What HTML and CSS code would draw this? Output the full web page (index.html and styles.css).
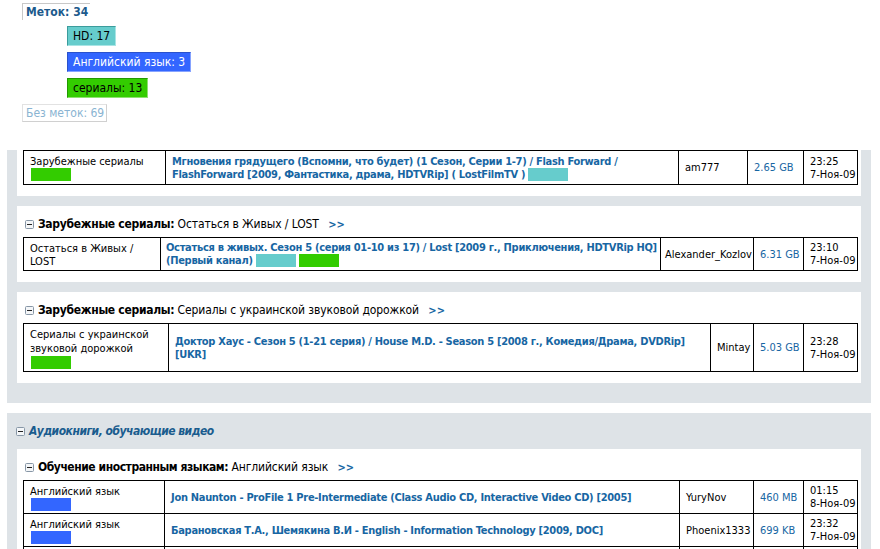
FILE: index.html
```html
<!DOCTYPE html>
<html lang="ru">
<head>
<meta charset="utf-8">
<title>Трекер</title>
<link rel="stylesheet" href="styles.css">
</head>
<body>
<div class="tags">
  <div class="tags-head">Меток: 34</div>
  <ul class="tag-list">
    <li class="tag tag-hd">HD: 17</li>
    <li class="tag tag-en">Английский язык: 3</li>
    <li class="tag tag-ser">сериалы: 13</li>
  </ul>
  <div class="tags-none">Без меток: 69</div>
</div>

<div class="section">
  <div class="panel">
    <table class="list t1">
      <colgroup><col class="c1"><col class="c2"><col class="c3"><col class="c4"><col class="c5"></colgroup>
      <tr>
        <td class="cat">Зарубежные сериалы<span class="sw sw-block sw-ser"></span></td>
        <td class="title"><a href="#">Мгновения грядущего (Вспомни, что будет) (1 Сезон, Серии 1-7) / Flash Forward / FlashForward [2009, Фантастика, драма, HDTVRip] ( LostFilmTV )</a> <span class="sw sw-hd"></span></td>
        <td class="author">am777</td>
        <td class="size">2.65 GB</td>
        <td class="time">23:25<br>7-Ноя-09</td>
      </tr>
    </table>
  </div>

  <div class="panel">
    <div class="panel-head">
      <svg class="minus" width="9" height="9" viewBox="0 0 9 9"><rect x="0.5" y="0.5" width="8" height="8" rx="1" fill="#f4f6f8" stroke="#8796a6"/><path d="M2 4.5h5" stroke="#222" stroke-width="1"/></svg>
      <b>Зарубежные сериалы:</b> Остаться в Живых / LOST <a class="more" href="#">&gt;&gt;</a>
    </div>
    <table class="list t2">
      <colgroup><col class="c1"><col class="c2"><col class="c3"><col class="c4"><col class="c5"></colgroup>
      <tr>
        <td class="cat">Остаться в Живых / LOST</td>
        <td class="title"><a href="#">Остаться в живых. Сезон 5 (серия 01-10 из 17) / Lost [2009 г., Приключения, HDTVRip HQ] (Первый канал)</a> <span class="sw sw-hd"></span> <span class="sw sw-ser"></span></td>
        <td class="author">Alexander_Kozlov</td>
        <td class="size">6.31 GB</td>
        <td class="time">23:10<br>7-Ноя-09</td>
      </tr>
    </table>
  </div>

  <div class="panel">
    <div class="panel-head">
      <svg class="minus" width="9" height="9" viewBox="0 0 9 9"><rect x="0.5" y="0.5" width="8" height="8" rx="1" fill="#f4f6f8" stroke="#8796a6"/><path d="M2 4.5h5" stroke="#222" stroke-width="1"/></svg>
      <b>Зарубежные сериалы:</b> Сериалы с украинской звуковой дорожкой <a class="more" href="#">&gt;&gt;</a>
    </div>
    <table class="list t3">
      <colgroup><col class="c1"><col class="c2"><col class="c3"><col class="c4"><col class="c5"></colgroup>
      <tr>
        <td class="cat">Сериалы с украинской звуковой дорожкой<span class="sw sw-block sw-ser"></span></td>
        <td class="title"><a href="#">Доктор Хаус - Сезон 5 (1-21 серия) / House M.D. - Season 5 [2008 г., Комедия/Драма, DVDRip] [UKR]</a></td>
        <td class="author">Mintay</td>
        <td class="size">5.03 GB</td>
        <td class="time">23:28<br>7-Ноя-09</td>
      </tr>
    </table>
  </div>
</div>

<div class="section section-b">
  <div class="section-head">
    <svg class="minus" width="9" height="9" viewBox="0 0 9 9"><rect x="0.5" y="0.5" width="8" height="8" rx="1" fill="#f4f6f8" stroke="#8796a6"/><path d="M2 4.5h5" stroke="#222" stroke-width="1"/></svg>
    <span class="section-title">Аудиокниги, обучающие видео</span>
  </div>
  <div class="panel">
    <div class="panel-head">
      <svg class="minus" width="9" height="9" viewBox="0 0 9 9"><rect x="0.5" y="0.5" width="8" height="8" rx="1" fill="#f4f6f8" stroke="#8796a6"/><path d="M2 4.5h5" stroke="#222" stroke-width="1"/></svg>
      <b class="tight">Обучение иностранным языкам:</b> Английский язык <a class="more" href="#">&gt;&gt;</a>
    </div>
    <table class="list t4">
      <colgroup><col class="c1"><col class="c2"><col class="c3"><col class="c4"><col class="c5"></colgroup>
      <tr>
        <td class="cat">Английский язык<span class="sw sw-block sw-en"></span></td>
        <td class="title"><a href="#">Jon Naunton - ProFile 1 Pre-Intermediate (Class Audio CD, Interactive Video CD) [2005]</a></td>
        <td class="author">YuryNov</td>
        <td class="size">460 MB</td>
        <td class="time">01:15<br>8-Ноя-09</td>
      </tr>
      <tr>
        <td class="cat">Английский язык<span class="sw sw-block sw-en"></span></td>
        <td class="title"><a href="#">Барановская Т.А., Шемякина В.И - English - Information Technology [2009, DOC]</a></td>
        <td class="author">Phoenix1333</td>
        <td class="size">699 KB</td>
        <td class="time">23:32<br>7-Ноя-09</td>
      </tr>
      <tr>
        <td class="cat">Английский язык<span class="sw sw-block sw-en"></span></td>
        <td class="title"><a href="#">Headway Upper-Intermediate - Student's Book [2005, PDF, MP3]</a></td>
        <td class="author">ksenia_m</td>
        <td class="size">312 MB</td>
        <td class="time">22:47<br>7-Ноя-09</td>
      </tr>
    </table>
  </div>
</div>
</body>
</html>
```

FILE: styles.css
```css
html, body {
  margin: 0;
  padding: 0;
  background: #ffffff;
}

body {
  font-family: "DejaVu Sans Condensed", "Liberation Sans", sans-serif;
  font-size: 11px;
  color: #000;
}

a {
  text-decoration: none;
  color: #1766a3;
}

/* ---------- tag cloud ---------- */
.tags {
  padding: 3px 0 0 22px;
  height: 147px;
  font-size: 12px;
}

.tags-head {
  display: inline-block;
  font-weight: bold;
  color: #1c5a8c;
  line-height: 15px;
  padding: 1px 2px 0 3px;
  border-left: 1px solid #c8c8c8;
  border-top: 1px solid #c8c8c8;
}

.tag-list {
  list-style: none;
  margin: 6px 0 0 45px;
  padding: 0;
}

.tag {
  display: table;
  line-height: 18px;
  padding: 0 5px;
  margin-bottom: 6px;
  border: 1px solid;
}

.tag-hd {
  background: #66cccc;
  border-color: #3b9c9c #a8e4e4 #a8e4e4 #3b9c9c;
  color: #000;
}

.tag-en {
  background: #3366ff;
  border-color: #2a52cc #86a3ff #86a3ff #2a52cc;
  color: #fff;
}

.tag-ser {
  background: #33cc00;
  border-color: #229900 #8ee070 #8ee070 #229900;
  color: #000;
}

.tags-none {
  display: inline-block;
  color: #8ab4d2;
  line-height: 15px;
  padding: 1px 2px 0 3px;
  border: 1px solid #e2e2e2;
  border-right-color: #d0d0d0;
  border-bottom-color: #d0d0d0;
}

/* ---------- sections ---------- */
.section {
  margin-left: 7px;
  width: 844px;
  background: #dee3e7;
  padding: 0 10px 20px;
}

.section-b {
  margin-top: 10px;
  padding-top: 10px;
}

.section-head {
  display: flex;
  align-items: center;
  height: 16px;
  margin: 0 0 10px -1px;
}

.section-title {
  font-size: 12px;
  font-weight: bold;
  font-style: italic;
  letter-spacing: -0.5px;
  color: #1a5c8e;
}

.panel {
  background: #fff;
  padding: 0 4px 11px 6px;
  margin-bottom: 10px;
}

.panel:last-child {
  margin-bottom: 0;
}

.panel-head {
  display: flex;
  align-items: center;
  height: 16px;
  padding: 10px 0 0 2px;
  margin-bottom: 5px;
  font-size: 12px;
  letter-spacing: -0.1px;
  white-space: pre;
}

.minus {
  flex: none;
  margin-right: 4px;
}

.panel-head b {
  font-weight: bold;
  letter-spacing: -0.3px;
}

.panel-head b.tight {
  letter-spacing: -0.45px;
}

.more {
  margin-left: 6px;
  font-weight: bold;
  font-size: 11px;
  letter-spacing: 0;
  color: #1766a3;
}

/* ---------- list tables ---------- */
.list {
  width: 834px;
  table-layout: fixed;
  border-collapse: collapse;
}

.list td {
  border: 1px solid #000;
  padding: 3px 6px 3px;
  line-height: 13px;
  vertical-align: middle;
}

.list td.cat {
  vertical-align: top;
  padding: 4px 6px 2px;
}

.t1 td.cat {
  padding-bottom: 3px;
}

.t3 td.cat {
  line-height: 14px;
}

.title a {
  font-weight: bold;
  letter-spacing: -0.3px;
}

.t2 td.title {
  padding: 3px 2px 3px 5px;
}

.t2 td.author {
  padding: 3px 4px;
}

.size {
  color: #1766a3;
  white-space: nowrap;
}

.author, .time {
  white-space: nowrap;
}

.sw {
  display: inline-block;
  width: 40px;
  height: 13px;
  vertical-align: -3px;
}

.sw-block {
  display: block;
  margin: 0 0 0 1px;
}

.sw-hd { background: #66cccc; }
.sw-ser { background: #33cc00; }
.sw-en { background: #3366ff; }

.t1 .c1 { width: 142px; }
.t1 .c2 { width: 513px; }
.t1 .c3 { width: 69px; }
.t1 .c4 { width: 56px; }
.t1 .c5 { width: 54px; }

.t2 .c1 { width: 137px; }
.t2 .c2 { width: 500px; }
.t2 .c3 { width: 93px; }
.t2 .c4 { width: 50px; }
.t2 .c5 { width: 54px; }

.t3 .c1 { width: 145px; }
.t3 .c2 { width: 542px; }
.t3 .c3 { width: 43px; }
.t3 .c4 { width: 50px; }
.t3 .c5 { width: 54px; }

.t4 .c1 { width: 141px; }
.t4 .c2 { width: 515px; }
.t4 .c3 { width: 74px; }
.t4 .c4 { width: 50px; }
.t4 .c5 { width: 54px; }
```
